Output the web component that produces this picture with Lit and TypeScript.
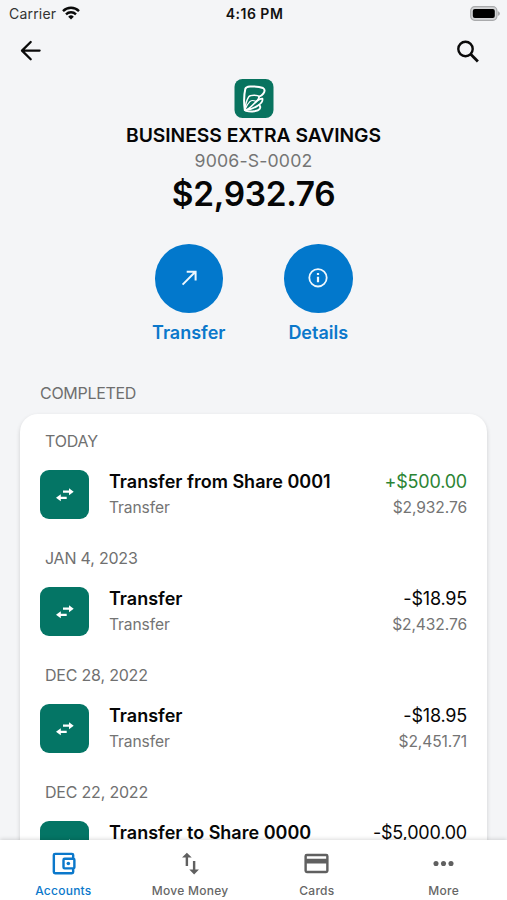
import { LitElement, html, css, svg } from "lit";
import { customElement } from "lit/decorators.js";
import { classMap } from "lit/directives/class-map.js";

interface Transaction {
  date: string;
  title: string;
  kind: string;
  amount: string;
  balance: string;
  credit?: boolean;
}

const transactions: Transaction[] = [
  { date: "TODAY", title: "Transfer from Share 0001", kind: "Transfer", amount: "+$500.00", balance: "$2,932.76", credit: true },
  { date: "JAN 4, 2023", title: "Transfer", kind: "Transfer", amount: "-$18.95", balance: "$2,432.76" },
  { date: "DEC 28, 2022", title: "Transfer", kind: "Transfer", amount: "-$18.95", balance: "$2,451.71" },
  { date: "DEC 22, 2022", title: "Transfer to Share 0000", kind: "Transfer", amount: "-$5,000.00", balance: "$2,470.66" },
];

const walletIcon = svg`
  <path fill-rule="evenodd" d="M5 3h14a2 2 0 0 1 2 2v2.3a2 2 0 0 1 1 1.7v6a2 2 0 0 1-1 1.7V19a2 2 0 0 1-2 2H5a2 2 0 0 1-2-2V5a2 2 0 0 1 2-2zm0 2v14h14v-2h-6a2 2 0 0 1-2-2V9a2 2 0 0 1 2-2h6V5zm8 4v6h7V9z"/>
  <circle cx="16" cy="12" r="1.5"/>`;
const moveIcon = svg`<path d="M16 17.01V10h-2v7.01h-3L15 21l4-3.99h-3zM9 3 5 6.99h3V14h2V6.99h3L9 3z"/>`;
const cardIcon = svg`<path d="M20 4H4a2 2 0 0 0-2 2v12a2 2 0 0 0 2 2h16a2 2 0 0 0 2-2V6a2 2 0 0 0-2-2zm0 14H4v-6h16v6zm0-10H4V6h16v2z"/>`;
const moreIcon = svg`<circle cx="5.8" cy="12" r="2.1"/><circle cx="12" cy="12" r="2.1"/><circle cx="18.2" cy="12" r="2.1"/>`;

const tabs = [
  { label: "Accounts", icon: walletIcon, active: true },
  { label: "Move Money", icon: moveIcon, active: false },
  { label: "Cards", icon: cardIcon, active: false },
  { label: "More", icon: moreIcon, active: false },
];

@customElement("app-root")
export class AppRoot extends LitElement {
  static styles = css`
    :host {
      display: flex;
      flex-direction: column;
      box-sizing: border-box;
      width: 100%;
      height: 900px;
      overflow: hidden;
      background: #f4f5f7;
      color: #060606;
      font-family: Inter, "Liberation Sans", sans-serif;
      white-space: nowrap;
    }
    svg { display: block; flex: none; }
    .status {
      display: grid;
      grid-template-columns: 1fr auto 1fr;
      align-items: center;
      height: 26px;
      padding: 0 7px 0 9px;
      margin-bottom: 2px;
      font-size: 14px;
      flex: none;
    }
    .carrier { display: flex; align-items: center; gap: 6px; color: #333; letter-spacing: 0.2px; }
    .clock { font-weight: 600; font-size: 14px; letter-spacing: 0.5px; color: #111; }
    .battery { justify-self: end; }
    .header {
      display: flex;
      justify-content: space-between;
      align-items: center;
      height: 46px;
      padding: 0 26px 0 17px;
      flex: none;
    }
    .summary { display: flex; flex-direction: column; align-items: center; padding-top: 5px; flex: none; }
    .name { font-size: 19.3px; font-weight: 600; line-height: 24px; margin-top: 4px; letter-spacing: -0.04px; }
    .number { font-size: 17.7px; line-height: 24px; margin-top: 2px; color: #757575; letter-spacing: 0.15px; }
    .total { font-size: 33.4px; font-weight: 600; line-height: 42px; margin-top: 0; letter-spacing: -0.3px; }
    .actions { display: flex; justify-content: center; gap: 61px; margin-top: 29px; flex: none; }
    .action { display: flex; flex-direction: column; align-items: center; width: 68.5px; color: #0b78cb; font-size: 18px; font-weight: 600; line-height: 24px; }
    .disc { display: grid; place-items: center; width: 68.5px; height: 68.5px; border-radius: 50%; background: #0278cc; margin-bottom: 8.5px; flex: none; }
    .heading { margin: 36px 0 0 40px; font-size: 16px; line-height: 24px; color: #6e6e6e; letter-spacing: -0.3px; flex: none; }
    .ledger {
      flex: 1;
      min-height: 0;
      margin: 9px 20px 0;
      border-radius: 18px 18px 0 0;
      background: #fff;
      box-shadow: 0 2px 4px rgba(0, 0, 0, 0.16);
      padding: 15px 20px 0;
    }
    .day { height: 117px; }
    .date { font-size: 16px; line-height: 24px; padding-left: 5px; color: #707070; letter-spacing: -0.2px; }
    .row { display: flex; align-items: center; margin-top: 17px; height: 49px; }
    .tile { display: grid; place-items: center; width: 49px; height: 49px; border-radius: 9px; background: #047565; margin-right: 20px; flex: none; }
    .lines { display: flex; flex-direction: column; margin-top: -1px; }
    .lines.end { margin-left: auto; align-items: flex-end; }
    .title { font-size: 18px; font-weight: 600; line-height: 26px; }
    .amount { font-size: 18px; line-height: 26px; letter-spacing: -0.2px; }
    .amount.credit { color: #2b8434; }
    .sub { font-size: 15.6px; line-height: 25px; color: #747474; letter-spacing: -0.1px; }
    .tabs {
      display: grid;
      grid-template-columns: repeat(4, 1fr);
      height: 60px;
      background: #fff;
      box-shadow: 0 -1px 4px rgba(0, 0, 0, 0.14);
      position: relative;
      flex: none;
    }
    .tab { display: flex; flex-direction: column; align-items: center; padding: 9px 0 0; color: #666; fill: #606060; font-size: 12px; font-weight: 500; line-height: 16px; gap: 5px; letter-spacing: 0.25px; }
    .tab.active { color: #0b78cb; fill: #0b78cb; }
  `;

  render() {
    return html`
      <div class="status">
        <div class="carrier">
          <span>Carrier</span>
          <svg width="18" height="14" viewBox="0 0 18 14" fill="none" stroke="#0a0a0a" stroke-width="2.4">
            <path d="M1 5.1a11.4 11.4 0 0 1 16 0" />
            <path d="M4 8.3a7.2 7.2 0 0 1 10 0" />
            <path d="M9 13.6 6.2 10.7a4 4 0 0 1 5.6 0z" fill="#0a0a0a" stroke="none" />
          </svg>
        </div>
        <div class="clock">4:16 PM</div>
        <svg class="battery" width="30" height="15" viewBox="0 0 30 15">
          <rect x="0.7" y="0.7" width="26.2" height="13.6" rx="4" fill="#d4d5d7" stroke="#a9aaac" stroke-width="1.2" />
          <path d="M27.8 5v5q2.2-1 2.2-2.5T27.8 5z" fill="#a9aaac" />
          <rect x="2.8" y="2.9" width="22" height="9.2" rx="2" fill="#000" />
        </svg>
      </div>

      <div class="header">
        <svg width="28" height="28" viewBox="0 0 28 28" fill="none" stroke="#0a0a0a" stroke-width="2.3" stroke-linecap="round" stroke-linejoin="round">
          <path d="M22.6 13.6H5M13.7 5 5 13.6l8.7 8.7" />
        </svg>
        <svg width="25" height="25" viewBox="0 0 25 25" fill="none" stroke="#0a0a0a" stroke-width="2.4">
          <circle cx="9.5" cy="10" r="7.2" />
          <path d="m14.5 15 7.4 7.4" stroke-width="2.8" />
        </svg>
      </div>

      <div class="summary">
        <svg width="40" height="40" viewBox="0 0 40 40">
          <rect x="0.5" y="0" width="39" height="39" rx="8" fill="#08735f" />
          <g fill="none" stroke="#fff" stroke-linejoin="round" stroke-linecap="round">
            <path d="M10.800 31C9.800 24 10 15.500 11.400 9.600 11.900 8 13.500 7.700 16 7.500 20.500 7.200 26 7.600 29 9 31.200 10.300 30.900 12.500 29.300 14.600 28.300 15.900 27 17 25.200 17.600" stroke-width="2" />
            <path d="M10.800 31C11.400 25 12.700 21 14.700 17.800 15.500 16.600 17.500 16.200 20 16.200 22.600 16.300 24.500 16.700 25.200 17.600 25 20 23 22 21.500 23.500" stroke-width="1.500" />
            <path d="M10.800 31C12.500 27 14.200 24.200 16 22.400 17.500 21.300 19.800 21.400 21.500 22.300" stroke-width="1.200" />
            <path d="M11 31.200C17 29.500 19.500 24.500 23.500 21.500 25 20.300 27 19.400 28.500 19.600 29 22 26.500 24.800 24 26.500 20.500 28.900 16 30.800 11 31.300" stroke-width="1.700" />
            <path d="M12 31.800C17 33 24 32.500 25.800 29.700 26.600 28.300 26.200 27 25.300 26.200" stroke-width="1.900" />
          </g>
        </svg>
        <div class="name">BUSINESS EXTRA SAVINGS</div>
        <div class="number">9006-S-0002</div>
        <div class="total">$2,932.76</div>
      </div>

      <div class="actions">
        <div class="action">
          <div class="disc">
            <svg width="24" height="24" viewBox="0 0 24 24" fill="none" stroke="#eef7fd" stroke-width="2">
              <path d="M5.600 18.600 18.400 5.800M9.700 5.700h8.900v8.900" />
            </svg>
          </div>
          Transfer
        </div>
        <div class="action">
          <div class="disc">
            <svg width="22" height="22" viewBox="0 0 22 22" fill="none" stroke="#eef7fd" stroke-width="1.8">
              <circle cx="11" cy="10.800" r="8.700" />
              <path d="M11 9.800v5.500M11 6.100v2" stroke-width="2.200" />
            </svg>
          </div>
          Details
        </div>
      </div>

      <div class="heading">COMPLETED</div>
      <div class="ledger">${transactions.map((t) => this.transaction(t))}</div>

      <div class="tabs">
        ${tabs.map(
          (tab) => html`
            <div class=${classMap({ tab: true, active: tab.active })}>
              <svg width="29" height="29" viewBox="0 0 24 24">${tab.icon}</svg>
              <span>${tab.label}</span>
            </div>
          `,
        )}
      </div>
    `;
  }

  private transaction(t: Transaction) {
    return html`
      <div class="day">
        <div class="date">${t.date}</div>
        <div class="row">
          <div class="tile">
            <svg width="20" height="16" viewBox="0 0 20 16">
              <path fill="#fff" d="M8 3.600h6V1.200L18.700 4.700 14 8.200V5.800H8zM11.700 11.900H5.800V14.300L1 10.800l4.800-3.500v2.400h5.900z" />
            </svg>
          </div>
          <div class="lines">
            <div class="title">${t.title}</div>
            <div class="sub">${t.kind}</div>
          </div>
          <div class="lines end">
            <div class=${classMap({ amount: true, credit: !!t.credit })}>${t.amount}</div>
            <div class="sub">${t.balance}</div>
          </div>
        </div>
      </div>
    `;
  }
}
